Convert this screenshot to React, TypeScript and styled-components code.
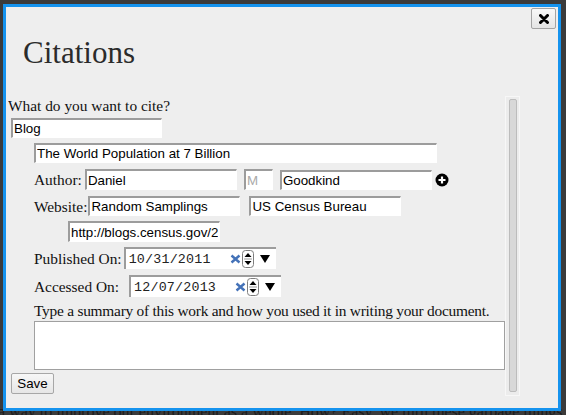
import React from 'react';
import styled, { createGlobalStyle } from 'styled-components';

const GlobalStyle = createGlobalStyle`
  html, body {
    margin: 0;
    height: 100%;
    overflow: hidden;
    background: #3b3b3b;
  }
`;

const PageBehind = styled.div`
  padding-top: 402px;
  margin-left: -2px;
  font: 16px/20px "Liberation Serif", "Times New Roman", serif;
  color: #1c1c1c;
  white-space: nowrap;
`;

const Dialog = styled.div`
  position: absolute;
  left: 3px;
  top: 4px;
  width: 558px;
  height: 407px;
  box-sizing: border-box;
  border: 3px solid #1593ee;
  background: #eeeeee;
  display: flex;
  flex-direction: column;
`;

const Header = styled.div`
  height: 88px;
  padding: 1px 2px 0 17px;
  display: flex;
  justify-content: space-between;
  align-items: flex-start;
`;

const Title = styled.h2`
  margin: 29px 0 0 0;
  font: normal 31px/31px "Liberation Serif", "Times New Roman", serif;
  color: #2b2b2b;
`;

const CloseButton = styled.button`
  width: 25px;
  height: 21px;
  box-sizing: border-box;
  margin: 0;
  padding: 0;
  border: 1px solid #a3a3a3;
  border-radius: 2px;
  background: linear-gradient(#f8f8f8, #e4e4e4);
  display: flex;
  align-items: center;
  justify-content: center;
`;

const Body = styled.div`
  display: flex;
  height: 300px;
  margin-left: 2px;
`;

const ScrollArea = styled.div`
  width: 497px;
  overflow: hidden;
  display: flex;
  flex-direction: column;
  align-items: flex-start;
`;

const Scrollbar = styled.div`
  width: 15px;
  box-sizing: border-box;
  padding: 2px 2px 3px 3px;
  background: #ececec;
  border: 1px solid #f7f7f7;
  display: flex;
`;

const Thumb = styled.div`
  flex: 1;
  background: #d8d8d8;
  border: 1px solid #bcbcbc;
  border-radius: 2px;
`;

const Prompt = styled.div<{ $top?: number; $tight?: boolean }>`
  font: 15.4px/19px "Liberation Serif", "Times New Roman", serif;
  color: #111;
  margin-top: ${p => p.$top ?? 0}px;
  letter-spacing: ${p => (p.$tight ? '-0.24px' : 'normal')};
  white-space: nowrap;
`;

const TextInput = styled.input<{ $w: number; $h?: number }>`
  box-sizing: border-box;
  width: ${p => p.$w}px;
  height: ${p => p.$h ?? 20}px;
  flex: none;
  margin: 0;
  padding: 0 1px;
  border-style: solid;
  border-width: 2px 1px 1px 2px;
  border-color: #9c9c9c #ffffff #ffffff #9c9c9c;
  background: #fff;
  font: 13.33px "Liberation Sans", Arial, sans-serif;
  color: #000;
  outline: none;
  &::placeholder {
    color: #a9a9a9;
  }
`;

const BlogInput = styled(TextInput)`
  margin: 3px 0 0 3px;
`;

const Section = styled.div`
  margin-left: 26px;
  display: flex;
  flex-direction: column;
  align-items: flex-start;
`;

const Row = styled.div<{ $top: number; $h: number; $indent?: number }>`
  margin-top: ${p => p.$top}px;
  margin-left: ${p => p.$indent ?? 0}px;
  height: ${p => p.$h}px;
  display: flex;
  align-items: center;
`;

const Label = styled.span<{ $gap: number }>`
  font: 15.4px/19px "Liberation Serif", "Times New Roman", serif;
  color: #111;
  margin-right: ${p => p.$gap}px;
  white-space: nowrap;
`;

const Spacer = styled.span<{ $w: number }>`
  width: ${p => p.$w}px;
  flex: none;
`;

const DateField = styled.div`
  box-sizing: border-box;
  width: 152px;
  height: 22px;
  border-style: solid;
  border-width: 2px 0 0 2px;
  border-color: #9c9c9c;
  background: #fff;
  display: flex;
  align-items: center;
  padding-left: 3px;
`;

const DateText = styled.span`
  width: 101px;
  font: 13.33px "Liberation Mono", "Courier New", monospace;
  letter-spacing: 0.2px;
  color: #222;
`;

const IconBox = styled.span<{ $ml: number }>`
  display: flex;
  margin-left: ${p => p.$ml}px;
`;

const SummaryBox = styled.textarea`
  box-sizing: border-box;
  width: 471px;
  height: 49px;
  margin: 1px 0 0 0;
  border: 1px solid #a0a0a0;
  background: #fff;
  resize: none;
  outline: none;
`;

const SaveButton = styled.button`
  box-sizing: border-box;
  width: 43px;
  height: 21px;
  margin: 3px 0 0 3px;
  padding: 0;
  border: 1px solid #a7a7a7;
  border-radius: 2px;
  background: linear-gradient(#f7f7f7, #e6e6e6);
  font: 13.33px "Liberation Sans", Arial, sans-serif;
  color: #000;
`;

const CloseIcon = () => (
  <svg width="10" height="10" viewBox="0 0 10 10">
    <path d="M1.5 1.5 L8.5 8.5 M8.5 1.5 L1.5 8.5" stroke="#000" strokeWidth="3" strokeLinecap="round" />
  </svg>
);

const PlusCircle = () => (
  <svg width="14" height="14" viewBox="0 0 14 14">
    <circle cx="7" cy="7" r="6.5" fill="#000" />
    <path d="M7 3.5 V10.5 M3.5 7 H10.5" stroke="#fff" strokeWidth="2.2" />
  </svg>
);

const ClearMark = () => (
  <svg width="11" height="10" viewBox="0 0 11 10">
    <path d="M1.5 1.5 L9.5 8.5 M9.5 1.5 L1.5 8.5" stroke="#4472b8" strokeWidth="2.4" />
  </svg>
);

const SpinnerIcon = () => (
  <svg width="12" height="18" viewBox="0 0 12 18">
    <rect x="0.5" y="0.5" width="11" height="17" rx="3" fill="#fff" stroke="#7e7e7e" />
    <line x1="2" y1="9" x2="10" y2="9" stroke="#9a9a9a" />
    <path d="M2.5 7 L6 3 L9.5 7 Z" fill="#000" />
    <path d="M2.5 11 L6 15 L9.5 11 Z" fill="#000" />
  </svg>
);

const DropArrow = () => (
  <svg width="10" height="8" viewBox="0 0 10 8">
    <path d="M0 0 H10 L5 8 Z" fill="#000" />
  </svg>
);

const DateInput = ({ value }: { value: string }) => (
  <DateField>
    <DateText>{value}</DateText>
    <ClearMark />
    <IconBox $ml={1}>
      <SpinnerIcon />
    </IconBox>
    <IconBox $ml={6}>
      <DropArrow />
    </IconBox>
  </DateField>
);

export default function App() {
  return (
    <>
      <GlobalStyle />
      <PageBehind>a way to improve our environment as a whole. How? Easy, we turn these garbage things</PageBehind>
      <Dialog>
        <Header>
          <Title>Citations</Title>
          <CloseButton aria-label="Close">
            <CloseIcon />
          </CloseButton>
        </Header>
        <Body>
          <ScrollArea>
            <Prompt>What do you want to cite?</Prompt>
            <BlogInput $w={151} defaultValue="Blog" />
            <Section>
              <Row $top={5} $h={20}>
                <TextInput $w={403} defaultValue="The World Population at 7 Billion" />
              </Row>
              <Row $top={6} $h={21}>
                <Label $gap={3}>Author:</Label>
                <TextInput $w={152} $h={21} defaultValue="Daniel" />
                <Spacer $w={7} />
                <TextInput $w={29} $h={21} placeholder="M" />
                <Spacer $w={7} />
                <TextInput $w={152} $h={20} defaultValue="Goodkind" />
                <Spacer $w={3} />
                <PlusCircle />
              </Row>
              <Row $top={6} $h={20}>
                <Label $gap={1}>Website:</Label>
                <TextInput $w={152} defaultValue="Random Samplings" />
                <Spacer $w={9} />
                <TextInput $w={152} defaultValue="US Census Bureau" />
              </Row>
              <Row $top={5} $h={21} $indent={34}>
                <TextInput $w={152} $h={21} defaultValue="http://blogs.census.gov/2011/10/31/the-world-population-at-7-billion/" />
              </Row>
              <Row $top={5} $h={22}>
                <Label $gap={2}>Published On:</Label>
                <DateInput value="10/31/2011" />
              </Row>
              <Row $top={6} $h={22}>
                <Label $gap={10}>Accessed On:</Label>
                <DateInput value="12/07/2013" />
              </Row>
              <Prompt $top={4} $tight>
                Type a summary of this work and how you used it in writing your document.
              </Prompt>
              <SummaryBox />
            </Section>
            <SaveButton>Save</SaveButton>
          </ScrollArea>
          <Scrollbar>
            <Thumb />
          </Scrollbar>
        </Body>
      </Dialog>
    </>
  );
}
